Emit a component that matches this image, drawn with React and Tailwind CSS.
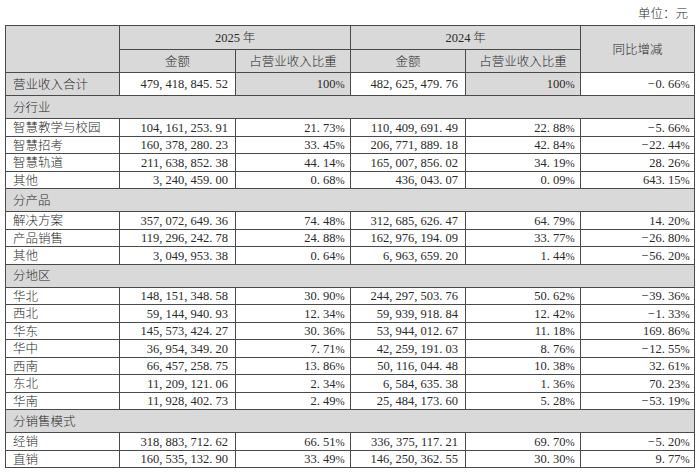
import React from "react";

const CJK = { fontFamily: '"Noto Sans CJK SC", "Noto Sans", sans-serif' };
const NUMF = { fontFamily: '"Liberation Serif", "Noto Sans CJK SC", serif' };

function Num({ v }) {
  const parts = v.split("").map((c, i) => {
    if (/[0-9]/.test(c)) return c;
    if (c === "%")
      return (
        <span key={i} className="inline-block w-[7.5px] text-[11px] text-left tracking-[-0.5px]">
          %
        </span>
      );
    if (c === "-")
      return (
        <span key={i} className="inline-block w-[8px] text-left">
          −
        </span>
      );
    return (
      <span key={i} className="inline-block w-[6.25px] text-left">
        {c}
      </span>
    );
  });
  return <span className="font-normal" style={NUMF}>{parts}</span>;
}

const sections = [
  {
    title: "分行业",
    rows: [
      ["智慧教学与校园", "104,161,253.91", "21.73%", "110,409,691.49", "22.88%", "-5.66%"],
      ["智慧招考", "160,378,280.23", "33.45%", "206,771,889.18", "42.84%", "-22.44%"],
      ["智慧轨道", "211,638,852.38", "44.14%", "165,007,856.02", "34.19%", "28.26%"],
      ["其他", "3,240,459.00", "0.68%", "436,043.07", "0.09%", "643.15%"],
    ],
  },
  {
    title: "分产品",
    rows: [
      ["解决方案", "357,072,649.36", "74.48%", "312,685,626.47", "64.79%", "14.20%"],
      ["产品销售", "119,296,242.78", "24.88%", "162,976,194.09", "33.77%", "-26.80%"],
      ["其他", "3,049,953.38", "0.64%", "6,963,659.20", "1.44%", "-56.20%"],
    ],
  },
  {
    title: "分地区",
    rows: [
      ["华北", "148,151,348.58", "30.90%", "244,297,503.76", "50.62%", "-39.36%"],
      ["西北", "59,144,940.93", "12.34%", "59,939,918.84", "12.42%", "-1.33%"],
      ["华东", "145,573,424.27", "30.36%", "53,944,012.67", "11.18%", "169.86%"],
      ["华中", "36,954,349.20", "7.71%", "42,259,191.03", "8.76%", "-12.55%"],
      ["西南", "66,457,258.75", "13.86%", "50,116,044.48", "10.38%", "32.61%"],
      ["东北", "11,209,121.06", "2.34%", "6,584,635.38", "1.36%", "70.23%"],
      ["华南", "11,928,402.73", "2.49%", "25,484,173.60", "5.28%", "-53.19%"],
    ],
  },
  {
    title: "分销售模式",
    rows: [
      ["经销", "318,883,712.62", "66.51%", "336,375,117.21", "69.70%", "-5.20%"],
      ["直销", "160,535,132.90", "33.49%", "146,250,362.55", "30.30%", "9.77%"],
    ],
  },
];

const bd = "border border-[#4a4a4a]";
const gray = "bg-[#d9d9d9]";

export default function App() {
  return (
    <div className="w-[700px] h-[475px] bg-white text-[#2a2a2a] text-[12.5px] leading-none font-light" style={CJK}>
      <div className="h-[25px] flex items-center justify-end pr-[12px] pt-[2px]">单位：元</div>
      <table className="ml-[5px] w-[689px] table-fixed border-collapse">
        <colgroup>
          <col className="w-[114px]" />
          <col className="w-[116px]" />
          <col className="w-[115px]" />
          <col className="w-[115px]" />
          <col className="w-[115px]" />
          <col className="w-[114px]" />
        </colgroup>
        <tbody>
          <tr className="h-[24px]">
            <td rowSpan={2} className={`${bd} ${gray}`}></td>
            <td colSpan={2} className={`${bd} ${gray} text-center`}>
              <span className="font-normal" style={NUMF}>2025</span> 年
            </td>
            <td colSpan={2} className={`${bd} ${gray} text-center`}>
              <span className="font-normal" style={NUMF}>2024</span> 年
            </td>
            <td rowSpan={2} className={`${bd} ${gray} text-center`}>同比增减</td>
          </tr>
          <tr className="h-[23px]">
            <td className={`${bd} ${gray} text-center`}>金额</td>
            <td className={`${bd} ${gray} text-center`}>占营业收入比重</td>
            <td className={`${bd} ${gray} text-center`}>金额</td>
            <td className={`${bd} ${gray} text-center`}>占营业收入比重</td>
          </tr>
          <tr className="h-[23px]">
            <td className={`${bd} ${gray} pl-[7px]`}>营业收入合计</td>
            <td className={`${bd} bg-white text-right pr-[7px]`}><Num v="479,418,845.52" /></td>
            <td className={`${bd} ${gray} text-right pr-[7px]`}><Num v="100%" /></td>
            <td className={`${bd} bg-white text-right pr-[7px]`}><Num v="482,625,479.76" /></td>
            <td className={`${bd} ${gray} text-right pr-[7px]`}><Num v="100%" /></td>
            <td className={`${bd} bg-white text-right pr-[6px]`}><Num v="-0.66%" /></td>
          </tr>
          {sections.map((s) => (
            <React.Fragment key={s.title}>
              <tr className="h-[23px]">
                <td colSpan={6} className={`${bd} ${gray} pl-[7px]`}>{s.title}</td>
              </tr>
              {s.rows.map((r, i) => (
                <tr key={i} className="h-[17.5px]">
                  <td className={`${bd} pl-[7px] whitespace-nowrap`}>{r[0]}</td>
                  <td className={`${bd} text-right pr-[7px]`}><Num v={r[1]} /></td>
                  <td className={`${bd} text-right pr-[7px]`}><Num v={r[2]} /></td>
                  <td className={`${bd} text-right pr-[7px]`}><Num v={r[3]} /></td>
                  <td className={`${bd} text-right pr-[7px]`}><Num v={r[4]} /></td>
                  <td className={`${bd} text-right pr-[6px]`}><Num v={r[5]} /></td>
                </tr>
              ))}
            </React.Fragment>
          ))}
        </tbody>
      </table>
    </div>
  );
}
